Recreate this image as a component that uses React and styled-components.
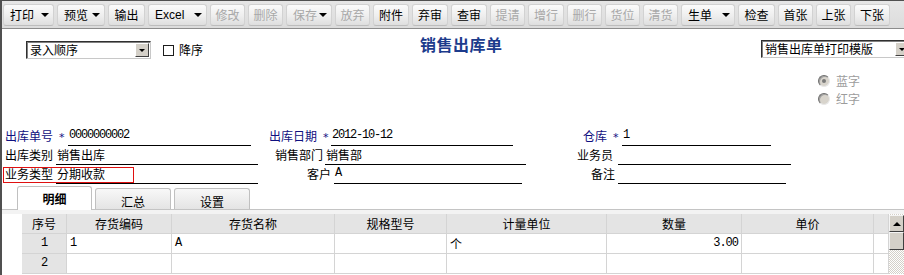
import React from "react";
import styled, { createGlobalStyle, css } from "styled-components";

const GlobalStyle = createGlobalStyle`
  html, body {
    margin: 0;
    padding: 0;
    background: #fff;
    overflow: hidden;
  }
  body {
    font-family: "Noto Sans CJK SC", "Liberation Sans", sans-serif;
    font-size: 12px;
    color: #000;
  }
  * {
    box-sizing: border-box;
  }
`;

const navy = "#101080";

const Page = styled.div`
  width: 904px;
  height: 275px;
  overflow: hidden;
  background: #fff;
  border-top: 1px solid #505050;
  border-left: 2px solid #505050;
`;

/* ---------- toolbar ---------- */

const Toolbar = styled.div`
  display: flex;
  gap: 3px;
  height: 28px;
  padding: 3px 0 0 1px;
  background: linear-gradient(#e6e6e6, #dcdcdc);
  border-bottom: 1px solid #8c8c8c;
`;

const ToolButton = styled.div`
  flex: none;
  width: ${(p) => p.$w}px;
  height: 22px;
  display: flex;
  align-items: center;
  justify-content: ${(p) => (p.$menu ? "flex-start" : "center")};
  padding: ${(p) => (p.$menu ? "0 4px 0 6px" : "0")};
  border-radius: 3px;
  border: 1px solid #d2d2d2;
  border-bottom-color: #bdbdbd;
  background: linear-gradient(#fbfbfb, #eeeeee 55%, #dedede);
  color: ${(p) => (p.$off ? "#a8a8a8" : "#000")};
  font-size: 12px;
  line-height: 14px;
  white-space: nowrap;
  font-family: ${(p) =>
    p.$latin ? `"Liberation Sans", sans-serif` : `"Noto Sans CJK SC", sans-serif`};
`;

const Caret = styled.span`
  margin-left: auto;
  width: 0;
  height: 0;
  border-left: 4px solid transparent;
  border-right: 4px solid transparent;
  border-top: 4px solid #000;
`;

/* ---------- header area ---------- */

const HeaderRow = styled.div`
  display: grid;
  grid-template-columns: 418px 341px 1fr;
  height: 22px;
  margin-top: 7px;
`;

const LeftTools = styled.div`
  display: flex;
  align-items: flex-start;
  padding: 5px 0 0 24px;
`;

const Select = styled.div`
  flex: none;
  width: ${(p) => p.$w}px;
  height: 18px;
  display: flex;
  align-items: center;
  background: #fff;
  border: 1px solid #303030;
  border-right-color: #c8c8c8;
  border-bottom-color: #c8c8c8;
  box-shadow: inset 1px 1px 0 #808080;
  padding: 0 1px 0 3px;
  line-height: 14px;
  white-space: nowrap;
`;

const DropBtn = styled.span`
  margin-left: auto;
  flex: none;
  width: 14px;
  height: 14px;
  display: flex;
  align-items: center;
  justify-content: center;
  background: #d4d0c8;
  border: 1px solid;
  border-color: #fff #404040 #404040 #fff;
  &::after {
    content: "";
    border-left: 3px solid transparent;
    border-right: 3px solid transparent;
    border-top: 3px solid #000;
  }
`;

const CheckLabel = styled.label`
  display: flex;
  align-items: center;
  gap: 5px;
  margin: 2px 0 0 12px;
  line-height: 14px;
`;

const CheckBox = styled.span`
  width: 11px;
  height: 11px;
  border: 1px solid #1c1c1c;
  background: #fff;
`;

const Title = styled.h1`
  margin: 0;
  font-size: 16px;
  line-height: 16px;
  font-weight: bold;
  color: #1c3b8c;
  letter-spacing: 0.5px;
`;

const RightTools = styled.div`
  display: flex;
  padding-top: 4px;
`;

const RadioGroup = styled.div`
  display: flex;
  flex-direction: column;
  align-items: flex-end;
  padding-right: 44px;
  margin-top: 14px;
`;

const RadioItem = styled.div`
  display: flex;
  align-items: center;
  gap: 6px;
  height: 18px;
  color: #9c9c9c;
  line-height: 14px;
`;

const RadioDot = styled.span`
  width: 12px;
  height: 12px;
  border-radius: 50%;
  background: #d8d4cc;
  border: 1px solid;
  border-color: #6e6e6e #e8e8e8 #e8e8e8 #6e6e6e;
  box-shadow: inset 1px 1px 0 #a0a0a0;
  display: flex;
  align-items: center;
  justify-content: center;
  ${(p) =>
    p.$on &&
    css`
      &::after {
        content: "";
        width: 4px;
        height: 4px;
        border-radius: 50%;
        background: #7a7a7a;
      }
    `}
`;

/* ---------- fields ---------- */

const Fields = styled.div`
  margin-top: 19px;
`;

const FieldRow = styled.div`
  display: grid;
  grid-template-columns: 260px 308px 1fr;
  height: 19px;
`;

const Field = styled.div`
  position: relative;
  display: flex;
  align-items: stretch;
  padding-left: ${(p) => p.$indent}px;
  height: 19px;
`;

const Label = styled.span`
  line-height: 18px;
  color: ${(p) => (p.$req ? navy : "#000")};
  white-space: nowrap;
`;

const Star = styled.span`
  width: ${(p) => p.$w}px;
  padding-left: 6px;
  color: ${navy};
  font-family: "DejaVu Sans", sans-serif;
  font-size: 11px;
  line-height: 22px;
`;

const Value = styled.span`
  width: ${(p) => p.$w}px;
  margin-left: ${(p) => p.$gap || 0}px;
  border-bottom: 1px solid #000;
  padding-left: 1px;
  line-height: 17px;
  white-space: nowrap;
  ${(p) =>
    p.$mono &&
    css`
      font-family: "Liberation Mono", monospace;
      letter-spacing: -1.2px;
    `}
`;

const Highlight = styled.span`
  position: absolute;
  left: 1px;
  top: 2px;
  width: 131px;
  height: 16px;
  border: 1px solid #e01010;
  pointer-events: none;
`;

/* ---------- tabs ---------- */

const TabBar = styled.div`
  display: flex;
  align-items: flex-end;
  gap: 3px;
  height: 25px;
  margin-top: 1px;
  padding-left: 15px;
  border-bottom: 1px solid #c4c4c4;
`;

const Tab = styled.div`
  flex: none;
  width: ${(p) => p.$w}px;
  display: flex;
  justify-content: center;
  border: 1px solid #c0c0c0;
  border-bottom: none;
  border-radius: 3px 3px 0 0;
  line-height: 14px;
  ${(p) =>
    p.$active
      ? css`
          height: 24px;
          margin-bottom: -1px;
          padding-top: 5px;
          background: #fff;
          font-weight: bold;
        `
      : css`
          height: 21px;
          padding-top: 6px;
          background: linear-gradient(#f8f8f8, #e4e4e4);
        `}
`;

/* ---------- table ---------- */

const Panel = styled.div`
  display: flex;
  padding: 4px 0 0 20px;
  background: linear-gradient(#f3f3f3 0 4px, #fff 4px);
`;

const Grid = styled.div`
  display: grid;
  grid-template-columns: 45px 105px 163px 112px 160px 135px 132px 15px;
  grid-auto-rows: 20px;
`;

const Cell = styled.div`
  border-right: 1px solid #d4d4d4;
  border-bottom: 1px solid #d4d4d4;
  line-height: 19px;
  padding: 0 3px;
  white-space: nowrap;
  overflow: hidden;
  text-align: ${(p) => p.$align || "left"};
  background: ${(p) => (p.$head ? "#e4e4e4" : "#fff")};
  ${(p) =>
    p.$mono &&
    css`
      font-family: "Liberation Mono", monospace;
      letter-spacing: -1px;
    `}
`;

const Scrollbar = styled.div`
  width: 15px;
  display: flex;
  flex-direction: column;
  padding-top: 1px;
  background: repeating-conic-gradient(#d4d0c8 0 25%, #fff 0 50%) 0 0 / 2px 2px;
`;

const ScrollBtn = styled.div`
  height: ${(p) => p.$h}px;
  background: #d4d0c8;
  border: 1px solid;
  border-color: #f4f4f4 #404040 #404040 #f4f4f4;
  display: flex;
  align-items: center;
  justify-content: center;
  ${(p) =>
    p.$arrow &&
    css`
      &::after {
        content: "";
        border-left: 4px solid transparent;
        border-right: 4px solid transparent;
        border-bottom: 4px solid #000;
      }
    `}
`;

/* ---------- data ---------- */

const tools = [
  { t: "打印", w: 51, menu: true },
  { t: "预览", w: 48, menu: true },
  { t: "输出", w: 37 },
  { t: "Excel", w: 59, menu: true, latin: true },
  { t: "修改", w: 35, off: true },
  { t: "删除", w: 35, off: true },
  { t: "保存", w: 46, menu: true, off: true },
  { t: "放弃", w: 35, off: true },
  { t: "附件", w: 36 },
  { t: "弃审", w: 36 },
  { t: "查审", w: 36 },
  { t: "提请", w: 35, off: true },
  { t: "增行", w: 36, off: true },
  { t: "删行", w: 35, off: true },
  { t: "货位", w: 35, off: true },
  { t: "清货", w: 35, off: true },
  { t: "生单", w: 54, menu: true },
  { t: "检查", w: 37 },
  { t: "首张", w: 35 },
  { t: "上张", w: 35 },
  { t: "下张", w: 36 },
];

const fieldRows = [
  [
    { label: "出库单号", req: true, star: 15, value: "0000000002", mono: true, indent: 3, w: 183 },
    { label: "出库日期", req: true, star: 14, value: "2012-10-12", mono: true, indent: 7, w: 182 },
    { label: "仓库", req: true, star: 15, value: "1", mono: true, indent: 13, w: 149 },
  ],
  [
    { label: "出库类别", value: "销售出库", indent: 3, gap: 3, w: 202 },
    { label: "销售部门", value: "销售部", indent: 13, gap: 2, w: 201 },
    { label: "业务员", value: "", indent: 7, gap: 5, w: 173 },
  ],
  [
    { label: "业务类型", value: "分期收款", indent: 3, gap: 3, w: 202, mark: true },
    { label: "客户", value: "A", mono: true, indent: 45, gap: 3, w: 188 },
    { label: "备注", value: "", indent: 21, gap: 3, w: 168 },
  ],
];

const columns = ["序号", "存货编码", "存货名称", "规格型号", "计量单位", "数量", "单价", ""];

const lines = [
  ["1", "1", "A", "", "个", "3.00", "", ""],
  ["2", "", "", "", "", "", "", ""],
];

const App = () => {
  return (
    <Page>
      <GlobalStyle />
      <Toolbar>
        {tools.map((b) => (
          <ToolButton key={b.t} $w={b.w} $menu={b.menu} $off={b.off} $latin={b.latin}>
            {b.t}
            {b.menu && <Caret />}
          </ToolButton>
        ))}
      </Toolbar>

      <HeaderRow>
        <LeftTools>
          <Select $w={125}>
            录入顺序
            <DropBtn />
          </Select>
          <CheckLabel>
            <CheckBox />
            降序
          </CheckLabel>
        </LeftTools>
        <Title>销售出库单</Title>
        <RightTools>
          <Select $w={150}>
            销售出库单打印模版
            <DropBtn />
          </Select>
        </RightTools>
      </HeaderRow>

      <RadioGroup>
        <RadioItem>
          <RadioDot $on />
          蓝字
        </RadioItem>
        <RadioItem>
          <RadioDot />
          红字
        </RadioItem>
      </RadioGroup>

      <Fields>
        {fieldRows.map((row, i) => (
          <FieldRow key={i}>
            {row.map((f) => (
              <Field key={f.label} $indent={f.indent}>
                <Label $req={f.req}>{f.label}</Label>
                {f.req && <Star $w={f.star}>*</Star>}
                <Value $w={f.w} $gap={f.gap} $mono={f.mono}>
                  {f.value}
                </Value>
                {f.mark && <Highlight />}
              </Field>
            ))}
          </FieldRow>
        ))}
      </Fields>

      <TabBar>
        <Tab $w={75} $active>
          明细
        </Tab>
        <Tab $w={76}>汇总</Tab>
        <Tab $w={76}>设置</Tab>
      </TabBar>

      <Panel>
        <Grid>
          {columns.map((c, i) => (
            <Cell key={"h" + i} $head $align="center">
              {c}
            </Cell>
          ))}
          {lines.map((row, r) =>
            row.map((v, i) => (
              <Cell
                key={r + "-" + i}
                $head={i === 0}
                $align={i === 0 ? "center" : i === 5 ? "right" : "left"}
                $mono={i !== 4}
              >
                {v}
              </Cell>
            ))
          )}
        </Grid>
        <Scrollbar>
          <ScrollBtn $h={17} $arrow />
          <ScrollBtn $h={18} />
        </Scrollbar>
      </Panel>
    </Page>
  );
};

export default App;
